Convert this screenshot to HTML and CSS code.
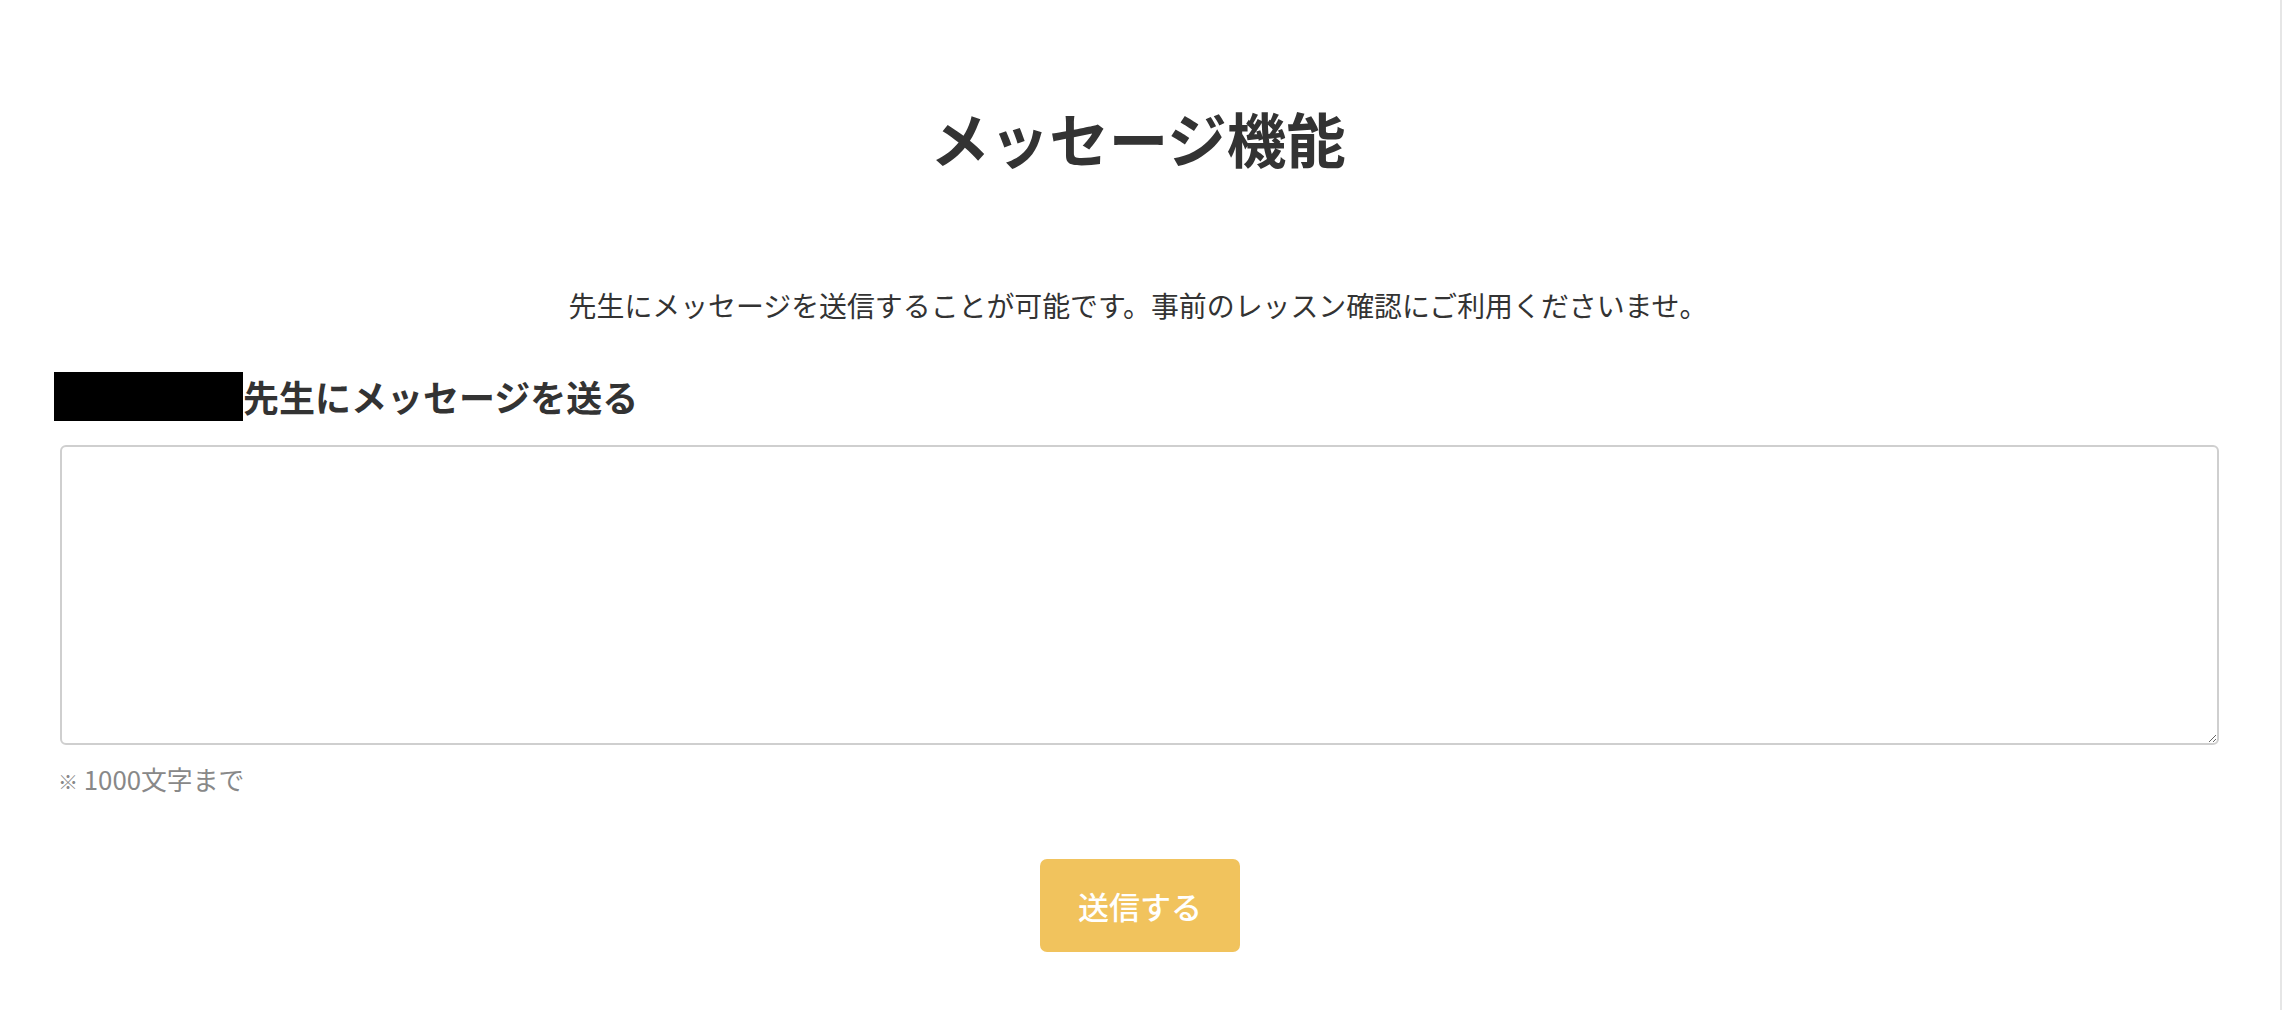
FILE: index.html
```html
<!DOCTYPE html>
<html lang="ja">
<head>
<meta charset="utf-8">
<title>メッセージ機能</title>
<link rel="stylesheet" href="styles.css">
</head>
<body>
<div class="page">
  <h1 class="title">メッセージ機能</h1>
  <p class="lead">先生にメッセージを送信することが可能です。事前のレッスン確認にご利用くださいませ。</p>
  <form class="form">
    <h2 class="heading"><span class="redacted"></span>先生にメッセージを送る</h2>
    <textarea class="message"></textarea>
    <p class="note"><span class="mark">※</span> 1000文字まで</p>
    <div class="actions">
      <button type="button" class="send">送信する</button>
    </div>
  </form>
</div>
</body>
</html>
```

FILE: styles.css
```css
html, body {
  margin: 0;
  padding: 0;
  background: #fff;
}
body {
  font-family: "Noto Sans CJK JP", "Noto Sans", sans-serif;
  color: #333;
}
.page {
  min-height: 1010px;
  box-sizing: border-box;
  border-right: 2px solid #e6e6e6;
  padding: 102px 58px 0 54px;
}
.title {
  margin: 0;
  text-align: center;
  font-size: 59.5px;
  line-height: 70px;
  font-weight: 700;
  color: #333;
}
.lead {
  margin: 113px 0 0;
  text-align: center;
  font-size: 27.9px;
  line-height: 40px;
  color: #333;
}
.form {
  margin-top: 47px;
}
.heading {
  margin: 0;
  display: flex;
  align-items: center;
  font-size: 36px;
  line-height: 49px;
  font-weight: 700;
  color: #333;
}
.redacted {
  display: inline-block;
  width: 189px;
  height: 49px;
  background: #000;
}
.message {
  display: block;
  box-sizing: border-box;
  margin: 24px 3px 0 6px;
  width: calc(100% - 9px);
  height: 300px;
  border: 2px solid #cfcfcf;
  border-radius: 6px;
  font-family: inherit;
  font-size: 23px;
  padding: 10px;
  background: #fff;
}
.note {
  margin: 17px 0 0 4px;
  font-size: 25.8px;
  line-height: 34px;
  color: #888;
}
.mark {
  font-size: 20px;
}
.actions {
  display: flex;
  justify-content: center;
  margin-top: 60px;
  padding-left: 4px;
}
.send {
  width: 200px;
  height: 93px;
  border: none;
  border-radius: 7px;
  background: #f1c35d;
  color: #fff;
  font-family: inherit;
  font-size: 31px;
  font-weight: 500;
  cursor: pointer;
}
```
